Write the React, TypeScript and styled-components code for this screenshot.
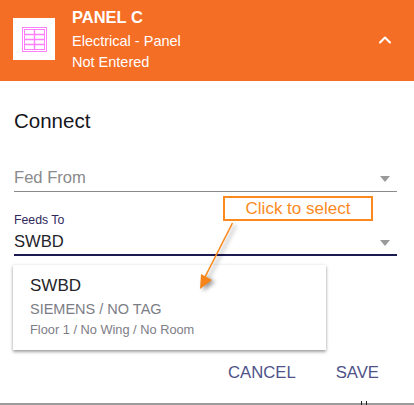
import React from "react";
import styled, { createGlobalStyle } from "styled-components";
import { ChevronUp } from "lucide-react";

const GlobalStyle = createGlobalStyle`
  html, body {
    margin: 0;
    padding: 0;
    background: #fff;
    overflow: hidden;
  }
  body {
    font-family: "Liberation Sans", Arial, sans-serif;
  }
`;

const Dialog = styled("div")`
  position: relative;
  width: 414px;
  height: 405px;
  display: flex;
  flex-direction: column;
  overflow: hidden;
  background: #fff;
`;

const Header = styled("div")`
  height: 81px;
  display: flex;
  flex-direction: row;
  align-items: center;
  padding: 0 14px 0 13px;
  background: #f56e26;
  color: #fff;
  box-sizing: border-box;
`;

const IconBox = styled("div")`
  width: 42px;
  height: 42px;
  display: flex;
  align-items: center;
  justify-content: center;
  background: #fff;
  margin-right: 17px;
  margin-top: -3px;
`;

const HeaderText = styled("div")`
  flex: 1;
  align-self: flex-start;
  display: flex;
  flex-direction: column;
  padding-top: 7px;
`;

const HeaderTitle = styled("div")`
  font-size: 16.5px;
  font-weight: 700;
  line-height: 21px;
  margin-bottom: 3px;
`;

const HeaderLine = styled("div")`
  font-size: 14.5px;
  line-height: 21px;
`;

const Toggle = styled("div")`
  display: flex;
  margin-right: 5px;
  margin-top: -1px;
`;

const Body = styled("div")`
  flex: 1;
  display: flex;
  flex-direction: column;
  padding: 27px 17px 0 14px;
`;

const Heading = styled("div")`
  font-size: 20.5px;
  line-height: 26px;
  color: #16161c;
`;

const Field = styled("div")<{ $top: number }>`
  margin-top: ${(p) => p.$top}px;
  display: flex;
  flex-direction: column;
`;

const FieldLabel = styled("div")`
  font-size: 12.3px;
  line-height: 14px;
  color: #2f2a5c;
`;

const SelectRow = styled("div")<{ $focused?: boolean }>`
  height: ${(p) => (p.$focused ? 27 : 28)}px;
  display: flex;
  align-items: center;
  justify-content: space-between;
  border-bottom: ${(p) => (p.$focused ? "2px solid #1c1a52" : "1px solid #8a8a8a")};
  padding-right: 7px;
`;

const SelectValue = styled("div")<{ $placeholder?: boolean }>`
  font-size: 16.6px;
  padding-top: 2px;
  color: ${(p) => (p.$placeholder ? "#8a8a8a" : "#24242a")};
`;

const Caret = styled("div")`
  width: 0;
  height: 0;
  border-left: 5px solid transparent;
  border-right: 5px solid transparent;
  border-top: 6px solid #9a9a9a;
  margin-top: 4px;
`;

const OptionsCard = styled("div")`
  width: 313px;
  height: 85px;
  margin: 9px 0 0 -1px;
  padding: 11px 0 0 17px;
  box-sizing: border-box;
  background: #fff;
  box-shadow: 0 2px 3px rgba(0, 0, 0, 0.35), 0 0 3px rgba(0, 0, 0, 0.1);
`;

const OptionName = styled("div")`
  font-size: 17px;
  line-height: 20px;
  color: #24242a;
`;

const OptionMaker = styled("div")`
  font-size: 14.5px;
  line-height: 20px;
  margin-top: 3px;
  color: #7d7d85;
`;

const OptionPlace = styled("div")`
  font-size: 12.8px;
  line-height: 16px;
  margin-top: 3px;
  color: #7d7d85;
`;

const Actions = styled("div")`
  display: flex;
  justify-content: flex-end;
  gap: 40px;
  margin-top: 13px;
  padding-right: 18px;
`;

const ActionButton = styled("div")`
  font-size: 16.7px;
  line-height: 20px;
  color: #4f5288;
`;

const Callout = styled("div")`
  position: absolute;
  left: 223px;
  top: 196px;
  width: 150px;
  height: 25px;
  box-sizing: border-box;
  display: flex;
  align-items: center;
  justify-content: center;
  border: 2px solid #fb8a1e;
  background: #fff;
  font-size: 17px;
  color: #fb8a1e;
`;

const ArrowLayer = styled("svg")`
  position: absolute;
  left: 190px;
  top: 215px;
  overflow: visible;
  filter: drop-shadow(3px 2px 2px rgba(0, 0, 0, 0.4));
`;

const BottomEdge = styled("div")`
  position: absolute;
  left: 0;
  right: 0;
  bottom: 0;
  height: 2px;
  background: #9c9c9c;
`;

const Tick = styled("div")<{ $left: number }>`
  position: absolute;
  bottom: 0;
  left: ${(p) => p.$left}px;
  width: 1px;
  height: 4px;
  background: #222;
`;

const PanelGlyph = () => (
  <svg width="25" height="25" viewBox="0 0 25 25" fill="none" stroke="#ff80fa">
    <rect x="0.5" y="0.5" width="24" height="24" strokeWidth="1" />
    <rect x="2.5" y="2.5" width="20" height="20" strokeWidth="1" />
    <path d="M12.5 2.5V22.5M2.5 7.5H22.5M2.5 12.5H22.5M2.5 17.5H22.5" strokeWidth="1.4" />
  </svg>
);

export default function App() {
  return (
    <Dialog>
      <GlobalStyle />
      <Header>
        <IconBox>
          <PanelGlyph />
        </IconBox>
        <HeaderText>
          <HeaderTitle>PANEL C</HeaderTitle>
          <HeaderLine>Electrical - Panel</HeaderLine>
          <HeaderLine>Not Entered</HeaderLine>
        </HeaderText>
        <Toggle>
          <ChevronUp size={20} strokeWidth={2.5} color="#fff" />
        </Toggle>
      </Header>
      <Body>
        <Heading>Connect</Heading>
        <Field $top={29}>
          <SelectRow>
            <SelectValue $placeholder>Fed From</SelectValue>
            <Caret />
          </SelectRow>
        </Field>
        <Field $top={21}>
          <FieldLabel>Feeds To</FieldLabel>
          <SelectRow $focused>
            <SelectValue>SWBD</SelectValue>
            <Caret />
          </SelectRow>
        </Field>
        <OptionsCard>
          <OptionName>SWBD</OptionName>
          <OptionMaker>SIEMENS / NO TAG</OptionMaker>
          <OptionPlace>Floor 1 / No Wing / No Room</OptionPlace>
        </OptionsCard>
        <Actions>
          <ActionButton>CANCEL</ActionButton>
          <ActionButton>SAVE</ActionButton>
        </Actions>
      </Body>
      <Callout>Click to select</Callout>
      <ArrowLayer width="60" height="80" viewBox="0 0 60 80">
        <path d="M42.5 8 L15 62" stroke="#fb8a1e" strokeWidth="1.6" fill="none" />
        <path d="M10 74 L11 59 L22 65 Z" fill="#f5841b" />
      </ArrowLayer>
      <BottomEdge />
      <Tick $left={361} />
      <Tick $left={366} />
    </Dialog>
  );
}
